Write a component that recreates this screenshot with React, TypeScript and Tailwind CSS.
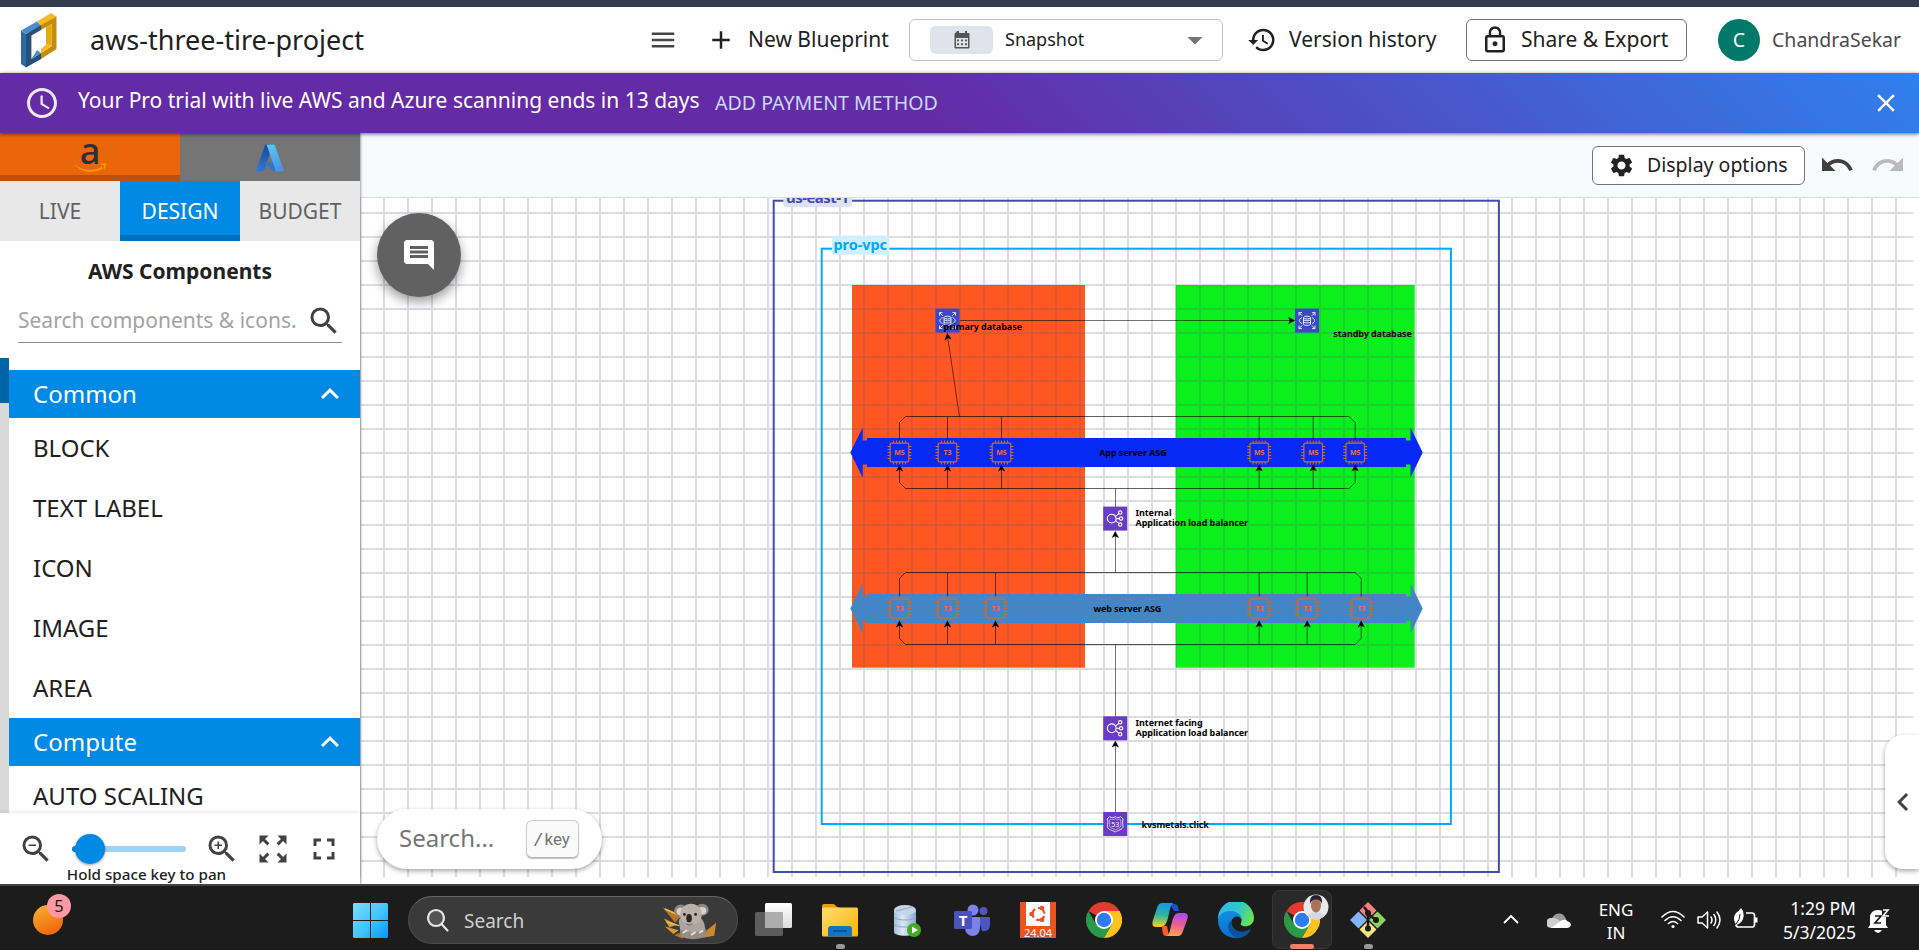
import React from "react";
import {
  MdMenu, MdAdd, MdHistory, MdLockOutline, MdSettings, MdUndo, MdRedo, MdSearch, MdZoomIn, MdZoomOut,
  MdZoomOutMap, MdFullscreen, MdComment, MdExpandLess, MdChevronLeft, MdAccessTime, MdClose, MdArrowDropDown,
} from "react-icons/md";

function Logo() {
  return (
    <svg width="36" height="55" viewBox="0 0 36 55">
      <path d="M0 17.500L5 21V54.500L0 51z" fill="#2f6ba3" />
      <path d="M0 17.500L16 8.500L20 12.500L5 21z" fill="#4a8dd0" />
      <path d="M16 8.500L30 0L35.500 3.500L20 12.500z" fill="#f8b922" />
      <path d="M5 21L20 12V17L10.400 22.500V46L20 40V46L5 54.500z" fill="#25507a" />
      <path d="M20 12L35.500 3.500V36L20 46V40L30.800 33V11L20 17z" fill="#c48c0c" />
      <path d="M25 14L30.800 11V33L25 31z" fill="#e8a90f" />
      <path d="M10.400 46L16 37L20 40z" fill="#4a8dd0" />
      <path d="M20 36L25.500 31L30.800 33L20 40z" fill="#f8b922" />
    </svg>
  );
}

function CalendarIcon() {
  return (
    <svg width="16" height="18" viewBox="0 0 16 18">
      <path d="M3 0h2v2h6V0h2v2h1.500a1 1 0 0 1 1 1v13.500a1 1 0 0 1-1 1h-13a1 1 0 0 1-1-1V3a1 1 0 0 1 1-1z" fill="#555" />
      <rect x="2" y="7" width="12" height="9" fill="#e1e3ec" />
      <g fill="#555">
        <rect x="3" y="8.500" width="2" height="1.800" /><rect x="7" y="8.500" width="2" height="1.800" /><rect x="11" y="8.500" width="2" height="1.800" />
        <rect x="3" y="12.300" width="2" height="1.800" /><rect x="7" y="12.300" width="2" height="1.800" /><rect x="11" y="12.300" width="2" height="1.800" />
      </g>
    </svg>
  );
}

function Header() {
  return (
    <header className="flex h-[66px] shrink-0 items-center bg-white text-[21px] text-[#212121]">
      <div className="flex w-[90px] pl-[21px]"><Logo /></div>
      <h1 className="w-[559px] text-[27px] leading-9">aws-three-tire-project</h1>
      <MdMenu className="ml-[-1px] size-[30px] text-[#444]" />
      <div className="ml-7 flex items-center">
        <MdAdd className="size-[30px]" />
        <span className="ml-3 w-[161px]">New Blueprint</span>
      </div>
      <div className="flex h-[42px] w-[314px] items-center rounded-md border border-[#c2c2c2] pl-5 text-[18px]">
        <span className="flex h-7 w-[63px] items-center justify-center rounded-md bg-[#e1e3ec]"><CalendarIcon /></span>
        <span className="ml-3 grow pb-0.5">Snapshot</span>
        <MdArrowDropDown className="mr-[9px] size-[36px] text-[#757575]" />
      </div>
      <MdHistory className="ml-[24px] size-[30px]" />
      <span className="ml-3 w-[177px]">Version history</span>
      <div className="flex h-[42px] w-[221px] items-center rounded-md border border-[#757575] pl-[13px]">
        <MdLockOutline className="size-[30px]" />
        <span className="ml-[11px]">Share &amp; Export</span>
      </div>
      <span className="ml-[31px] flex size-[42px] items-center justify-center rounded-full bg-[#00796b] text-[19.5px] text-white">C</span>
      <span className="ml-3 text-[19.5px] text-[#4a4a4a]">ChandraSekar</span>
    </header>
  );
}

function Banner() {
  return (
    <div className="z-10 flex h-[60px] shrink-0 items-center bg-[linear-gradient(45deg,#642ba6_48%,#2f80ed_100%)] text-white shadow-[0_1px_4px_rgba(0,0,0,0.6)]">
      <MdAccessTime className="ml-6 size-[36px] text-[#efe8f7]" />
      <span className="ml-[18px] w-[637px] pb-1 text-[21px]">Your Pro trial with live AWS and Azure scanning ends in 13 days</span>
      <span className="grow text-[19.6px] text-[#cbd8fb]">ADD PAYMENT METHOD</span>
      <MdClose className="mr-[18px] size-[30px]" />
    </div>
  );
}

function AmazonMark() {
  return (
    <svg width="34" height="34" viewBox="0 0 34 34" className="mt-1 overflow-visible">
      <text x="17" y="22.500" textAnchor="middle" fontSize="36" fontWeight="500" fill="#2b3036" fontFamily="Noto Sans, sans-serif">a</text>
      <path d="M1 22.500 C9 30.500 22 30.500 29 25.500 L29.500 27.500 C22 32.500 8 32.500 1 22.500z" fill="#ff9900" />
      <path d="M26 23 C29 22 32 22 33 22.500 C33.500 24.500 32 27.500 30.500 29 L31 24.500 z" fill="#ff9900" />
    </svg>
  );
}

function AzureMark() {
  return (
    <svg width="28" height="28" viewBox="0 0 28 28" className="mt-[2px]">
      <defs>
        <linearGradient id="azL" x1="0.500" y1="0" x2="0.300" y2="1"><stop offset="0" stopColor="#1b4a94" /><stop offset="1" stopColor="#3277d4" /></linearGradient>
        <linearGradient id="azR" x1="0.300" y1="0" x2="0.700" y2="1"><stop offset="0" stopColor="#5ec5f0" /><stop offset="1" stopColor="#4a91e6" /></linearGradient>
      </defs>
      <path d="M9.300 0.500 H17 L8.500 25.500 Q7.800 27.500 6 27.500 H1.200 Q-0.300 27.500 0.400 25.500z" fill="url(#azL)" />
      <path d="M8 18.500 H20 L21 27.500 H19.500 Q18.500 27.500 17.800 26.900z" fill="#2e74d3" />
      <path d="M10 0.500 H17.500 Q18.500 0.500 19 1.800 L27.500 25.500 Q28 27.500 26.500 27.500 H18.500 Q19.800 27 19.300 25.500 L11 1.800 Q10.700 0.700 10 0.500z" fill="url(#azR)" />
    </svg>
  );
}

function SectionHeader({ label }: { label: string }) {
  return (
    <div className="flex h-12 shrink-0 items-center justify-between bg-[#008ae6] pl-6 pr-3 text-2xl text-white">
      <span>{label}</span>
      <MdExpandLess className="size-[36px]" />
    </div>
  );
}

function Item({ label }: { label: string }) {
  return <div className="flex h-[60px] shrink-0 items-center pl-6 text-2xl text-[#212121]">{label}</div>;
}

function Sidebar() {
  return (
    <aside className="z-[5] flex w-[360px] shrink-0 flex-col bg-white shadow-[1px_0_2px_rgba(0,0,0,0.35)]">
      <div className="grid h-12 shrink-0 grid-cols-2">
        <div className="flex justify-center border-b-[6px] border-[#bf4f0a] bg-[#eb650b] pt-1"><AmazonMark /></div>
        <div className="flex justify-center bg-[#757575] pt-[9px]"><AzureMark /></div>
      </div>
      <div className="grid h-[60px] shrink-0 grid-cols-3 text-[21px] text-[#616161]">
        <div className="flex items-center justify-center bg-[#e8e8e8] pt-0.5">LIVE</div>
        <div className="flex items-center justify-center border-b-[6px] border-[#0070bd] bg-[#008ae6] pt-2 text-white">DESIGN</div>
        <div className="flex items-center justify-center bg-[#e8e8e8] pt-0.5">BUDGET</div>
      </div>
      <div className="flex h-[117px] shrink-0 flex-col px-[18px] pt-3">
        <h2 className="text-center text-[21px] leading-9 font-bold text-[#212121]">AWS Components</h2>
        <div className="mt-[10px] flex h-[44px] items-center justify-between border-b border-[#8c8c8c] text-[21px] text-[#a3a3a3]">
          <span>Search components &amp; icons.</span>
          <MdSearch className="size-[36px] text-[#424242]" />
        </div>
      </div>
      <div className="flex min-h-0 grow">
        <div className="w-[9px] shrink-0 bg-[#d9d9d9]"><div className="h-[45px] bg-[#0065a8]" /></div>
        <div className="flex grow flex-col overflow-hidden pt-3">
          <SectionHeader label="Common" />
          {["BLOCK", "TEXT LABEL", "ICON", "IMAGE", "AREA"].map((t) => <Item key={t} label={t} />)}
          <SectionHeader label="Compute" />
          <Item label="AUTO SCALING" />
        </div>
      </div>
      <div className="h-[71px] shrink-0 overflow-hidden bg-white shadow-[0_-1px_4px_rgba(0,0,0,0.1)]">
        <div className="flex h-[52px] items-center pt-5 text-[#424242]">
          <MdZoomOut className="ml-[18px] size-[36px]" />
          <div className="relative ml-[18px] h-[6px] w-[114px] rounded-full bg-[#9fd2f7]">
            <div className="h-full w-5 rounded-full bg-[#008ae6]" />
            <div className="absolute top-[-12px] left-[3px] size-[30px] rounded-full bg-[#008ae6] shadow-[0_1px_3px_rgba(0,0,0,0.4)]" />
          </div>
          <MdZoomIn className="ml-[18px] size-[36px]" />
          <MdZoomOutMap className="ml-[15px] size-[36px]" />
          <MdFullscreen className="ml-[15px] size-[36px]" />
        </div>
        <div className="w-[293px] text-center text-[15.2px] leading-[18px] font-medium text-[#212121]">Hold space key to pan</div>
      </div>
    </aside>
  );
}

function Arrow({ x, y, angle = 0 }: { x: number; y: number; angle?: number }) {
  return <path d="M0 0 L3.700 7 L0 5.200 L-3.700 7z" fill="#000" transform={`translate(${x} ${y}) rotate(${angle})`} />;
}

function Chip({ x, y, label }: { x: number; y: number; label: string }) {
  const pins = [-6, -3, 0, 3, 6];
  return (
    <g transform={`translate(${x} ${y})`} stroke="#d2692a" fill="none">
      <rect x="-9.300" y="-9.300" width="18.600" height="18.600" rx="1" strokeWidth="1.200" />
      <path
        strokeWidth="1"
        d={pins.map((p) => `M${p} -9.300V-12 M${p} 9.300V12 M-9.300 ${p}H-12 M9.300 ${p}H12`).join(" ")}
      />
      <text x="0" y="2.500" textAnchor="middle" fontSize="7" fontWeight="700" fill="#e8685a" stroke="none">{label}</text>
    </g>
  );
}

function Bar({ y, color }: { y: number; color: string }) {
  return (
    <path
      fill={color}
      d={`M850.300 ${y} L862.700 ${y - 25} V${y - 12} H867 V${y - 14.500} H1406 V${y - 12} H1410.500 V${y - 25} L1422.700 ${y} L1410.500 ${y + 25} V${y + 12} H1406 V${y + 14.500} H867 V${y + 12} H862.700 V${y + 25}z`}
    />
  );
}

function Group({ y, xs, labels, color }: { y: number; xs: number[]; labels: string[]; color: string }) {
  const a = xs[0];
  const b = xs[xs.length - 1];
  const mid = xs.slice(1, -1);
  return (
    <g>
      <Bar y={y} color={color} />
      <g stroke="#000" strokeOpacity="0.62" fill="none">
        <path d={`M${a} ${y - 12} V${y - 30} L${a + 6} ${y - 36} H${b - 6} L${b} ${y - 30} V${y - 12}`} />
        <path d={`M${a} ${y + 16} V${y + 30} L${a + 6} ${y + 36} H${b - 6} L${b} ${y + 30} V${y + 16}`} />
        <path d={mid.map((x) => `M${x} ${y - 36} V${y - 12} M${x} ${y + 36} V${y + 16}`).join(" ")} />
      </g>
      {xs.map((x, i) => <Chip key={x} x={x} y={y} label={labels[i]} />)}
      {xs.map((x) => <Arrow key={x} x={x} y={y + 12} />)}
    </g>
  );
}

function DatabaseNode({ x, y }: { x: number; y: number }) {
  return (
    <g transform={`translate(${x} ${y})`} fill="none" stroke="#e4e6fb" strokeWidth="1">
      <rect x="-12" y="-12" width="24" height="24" fill="#3b48cc" stroke="none" />
      <ellipse cx="0" cy="-3" rx="3.500" ry="1.400" />
      <path d="M-3.500 -3V3.500C-3.500 5.200 3.500 5.200 3.500 3.500V-3M-3.500 -0.800C-2.500 0.500 2.500 0.500 3.500 -0.800M-3.500 1.400C-2.500 2.700 2.500 2.700 3.500 1.400" />
      <path d="M-5 -3C-8.500 -1.500 -8.500 1.500 -5 3M5 -3C8.500 -1.500 8.500 1.500 5 3" />
      <path d="M-8 -5V-8H-5M-8 -8L-4.800 -4.800M8 -5V-8H5M8 -8L4.800 -4.800M-8 5V8H-5M-8 8L-4.800 4.800M8 5V8H5M8 8L4.800 4.800" />
    </g>
  );
}

function BalancerNode({ y }: { y: number }) {
  return (
    <g transform={`translate(1115.200 ${y})`} fill="none" stroke="#fff" strokeWidth="1.100">
      <rect x="-12" y="-12" width="24" height="24" fill="#693cc5" stroke="none" />
      <circle cx="-3.500" cy="0" r="4.400" />
      <path d="M1 0H4.200M0.300 -2.200L3.700 -4.800M0.300 2.200L3.700 4.800" />
      <circle cx="5.900" cy="0" r="1.700" />
      <circle cx="5" cy="-6" r="1.700" />
      <circle cx="5" cy="6" r="1.700" />
    </g>
  );
}

function RouteNode() {
  return (
    <g transform="translate(1115.200 824)" fill="none" stroke="#e6dcfa" strokeWidth="1">
      <rect x="-12" y="-12" width="24" height="24" fill="#693cc5" stroke="none" />
      <path d="M-5.500 -7.500C-3.500 -5.800 -1.500 -6.200 0 -7.300C1.500 -6.200 3.500 -5.800 5.500 -7.500L8 -5C6.500 -2 8 0 7.800 2.500C7.300 6 3 6 0 8C-3 6 -7.300 6 -7.800 2.500C-8 0 -6.500 -2 -8 -5z" />
      <path d="M-4.500 -5C-3 -4 -1.500 -4.300 0 -5.200C1.500 -4.300 3 -4 4.500 -5L5.800 -4C5 -1.500 6 0 5.700 2C5 4.200 2 4.500 0 5.800C-2 4.500 -5 4.200 -5.700 2C-6 0 -5 -1.500 -5.800 -4z" strokeWidth="0.600" />
      <text x="0" y="3" textAnchor="middle" fontSize="7" fill="#fff" stroke="none">53</text>
    </g>
  );
}

const labels: [string, number, number, number][] = [
  ["primary database", 943.5, 330, 78.5],
  ["standby database", 1333.3, 337, 78.5],
  ["App server ASG", 1099.2, 455.8, 67.5],
  ["web server ASG", 1093.4, 611.8, 68],
  ["Internal", 1135.6, 515.8, 36],
  ["Application load balancer", 1135.6, 525.8, 112.5],
  ["Internet facing", 1135.6, 726, 67],
  ["Application load balancer", 1135.6, 736, 112.5],
  ["kvsmetals.click", 1141.4, 828, 67.5],
];

function Diagram() {
  return (
    <svg width="1553" height="679" viewBox="360 198 1553 679" fontFamily="Noto Sans, sans-serif" className="block">
      <defs>
        <pattern id="grid" x="767" y="212" width="24" height="24" patternUnits="userSpaceOnUse">
          <path d="M0 0H24V2H2V24H0z" fill="#4c5768" fillOpacity="0.2" />
        </pattern>
      </defs>
      <rect x="852" y="285" width="233" height="382.700" fill="#ff5722" />
      <rect x="1175.700" y="285" width="239" height="382.700" fill="#0bf01c" />
      <rect x="360" y="198" width="1553" height="679" fill="url(#grid)" />
      <rect x="773.700" y="200.700" width="725.200" height="671.300" fill="none" stroke="#3f4db3" strokeWidth="2" />
      <rect x="821.700" y="248.700" width="629.200" height="575.300" fill="none" stroke="#03a9f4" strokeWidth="2" />
      <rect x="783.300" y="187" width="68.700" height="20" rx="3" fill="#e0e1f2" />
      <text x="786" y="202.500" fontSize="15" fontWeight="700" fill="#3f4db3" textLength="63">us-east-1</text>
      <rect x="832" y="235.500" width="57.500" height="19.300" rx="3" fill="#d3eefc" />
      <text x="833.500" y="250" fontSize="14.500" fontWeight="700" fill="#03a9f4" textLength="53.500">pro-vpc</text>
      <g stroke="#000" strokeOpacity="0.55" fill="none">
        <path d="M959.500 320.500H1290M959.400 416.500L948 339" />
        <path d="M1115.500 488.500V507M1115.500 536V572.500M1115.500 644.500V717M1115.500 746V812" />
      </g>
      <Group y={452.5} xs={[899.5, 947.5, 1001.5, 1259.2, 1313.2, 1355.2]} labels={["M5", "T3", "M5", "M5", "M5", "M5"]} color="#0629f5" />
      <Group y={608.5} xs={[899.5, 947.5, 995.5, 1259.2, 1307.2, 1361.2]} labels={["T3", "T3", "T3", "T3", "T3", "T3"]} color="#4486c5" />
      <DatabaseNode x={947.5} y={320.6} />
      <DatabaseNode x={1307} y={320.6} />
      <BalancerNode y={518.6} />
      <BalancerNode y={728.3} />
      <RouteNode />
      <Arrow x={1295} y={320.5} angle={90} />
      <Arrow x={947.3} y={333} angle={-7} />
      <Arrow x={1115.3} y={531} />
      <Arrow x={1115.3} y={740.5} />
      {labels.map(([t, x, y, w]) => (
        <text key={`${t}${y}`} x={x} y={y} fontSize="9" fontWeight="700" fill="#000" textLength={w}>{t}</text>
      ))}
    </svg>
  );
}

function Workspace() {
  return (
    <main className="flex min-w-0 grow flex-col bg-white">
      <div className="flex h-[65px] shrink-0 items-center justify-end border-b border-[#d9dce0] bg-[#f9fafc]">
        <div className="flex h-[39px] w-[213px] items-center rounded-md border border-[#757575] bg-white pl-[15px] text-[19.5px] text-[#212121]">
          <MdSettings className="size-[27px]" />
          <span className="ml-3">Display options</span>
        </div>
        <MdUndo className="ml-3.5 size-[36px] text-[#3f3f3f]" />
        <MdRedo className="mr-[13px] ml-[15px] size-[36px] text-[#bababa]" />
      </div>
      <div className="relative grow">
        <Diagram />
        <button className="absolute top-[15px] left-[17px] flex size-[84px] items-center justify-center rounded-full bg-[#616161] text-white shadow-[0_5px_12px_rgba(0,0,0,0.4)]">
          <MdComment className="size-[36px]" />
        </button>
        <div className="absolute top-[611px] left-[17px] flex h-[60px] w-[225px] items-center rounded-full bg-white pl-[22px] text-2xl text-[#757575] shadow-[0_2px_5px_rgba(0,0,0,0.35)]">
          <span className="w-[127px] pb-0.5">Search...</span>
          <span className="flex h-[38px] w-[53px] items-center justify-center rounded-md border border-[#ccc] border-b-[#b8b8b8] bg-[#fafafa] font-['Roboto',sans-serif] text-[17px] shadow-[0_1px_1px_rgba(0,0,0,0.25)]"><i className="mr-[3px] font-medium">/</i>key</span>
        </div>
        <div className="absolute top-[537px] right-0 flex h-[134px] w-[34px] items-center rounded-l-[18px] bg-white shadow-[0_2px_5px_rgba(0,0,0,0.35)]">
          <MdChevronLeft className="ml-0 size-[36px] shrink-0 text-[#424242]" />
        </div>
      </div>
    </main>
  );
}

function Chrome() {
  return (
    <svg width="36" height="36" viewBox="0 0 36 36">
      <path d="M18 18 L2.400 9 A18 18 0 0 1 33.600 9z" fill="#e33b2e" />
      <path d="M18 18 L10.200 22.500 L2.400 9 A18 18 0 0 0 18 36 L25.800 22.500z" fill="#2a9a48" />
      <path d="M18 9 H33.600 A18 18 0 0 1 18 36 L25.800 22.500z" fill="#fcc31c" />
      <circle cx="18" cy="18" r="9" fill="#fff" />
      <circle cx="18" cy="18" r="7.200" fill="#2f7cf0" />
    </svg>
  );
}

function Koala() {
  return (
    <svg width="56" height="42" viewBox="0 0 60 44">
      <path d="M3 29 L18 33 L12 37z M2 20 L16 27 L8 30z" fill="#d49a38" />
      <path d="M1 9 L22 16 L14 25z M13 38 L24 34 L22 42z" fill="#b57525" />
      <path d="M3 10 L20 18 M5 24 L18 28" stroke="#e8c36c" strokeWidth="1.500" />
      <path d="M48 33 L58 25 L56 39 L44 41z" fill="#c98a2c" />
      <path d="M18 24 C18 18 24 16 31 16 C42 16 47 24 46 34 C45 42 22 42 20 36z" fill="#aca49d" />
      <ellipse cx="20" cy="12" rx="7" ry="6.500" fill="#8d8580" />
      <ellipse cx="20" cy="13" rx="4.500" ry="4" fill="#dccfc9" />
      <ellipse cx="43" cy="11" rx="7" ry="6.500" fill="#8d8580" />
      <ellipse cx="43" cy="12" rx="4.500" ry="4" fill="#dccfc9" />
      <ellipse cx="31" cy="16" rx="11.500" ry="11.500" fill="#b9b1aa" />
      <ellipse cx="29" cy="20" rx="3" ry="4.500" fill="#2b2625" />
      <circle cx="24" cy="16" r="1.500" fill="#201c1a" />
      <circle cx="36" cy="16" r="1.500" fill="#201c1a" />
      <path d="M26 26 Q29 29 33 26" stroke="#6a5b55" fill="none" />
      <path d="M20 32 Q33 39 47 31 V40 Q33 45 20 40z" fill="#958c86" />
      <path d="M22 36 L27 33 M31 38 L36 35 M40 36 L44 33" stroke="#e6dfd9" strokeWidth="2" />
    </svg>
  );
}

function TaskIcon({ children, dot = false }: { children: React.ReactNode; dot?: boolean }) {
  return (
    <div className="flex w-[66px] shrink-0 flex-col items-center pt-4">
      {children}
      {dot && <span className="mt-[6px] h-[5px] w-[9px] rounded-full bg-[#969696]" />}
    </div>
  );
}

function Taskbar() {
  return (
    <footer className="z-20 flex h-[66px] shrink-0 border-t-2 border-[#424242] bg-[#1c1c1c] font-['Noto_Sans',sans-serif] text-white">
      <div className="w-[353px] shrink-0 pt-[7px] pl-[32px]">
        <svg width="40" height="44" viewBox="0 0 40 44">
          <defs><linearGradient id="orb" x1="0" y1="0" x2="0.500" y2="1"><stop offset="0" stopColor="#f4b436" /><stop offset="1" stopColor="#f26a0c" /></linearGradient></defs>
          <circle cx="16" cy="27" r="15" fill="url(#orb)" />
          <circle cx="27" cy="13" r="12" fill="#ff98a2" />
          <text x="27" y="19" textAnchor="middle" fontSize="16.500" fill="#1a1a1a">5</text>
        </svg>
      </div>
      <div className="w-[55px] shrink-0 pt-[17px]">
        <svg width="35" height="35" viewBox="0 0 35 35">
          <defs><linearGradient id="win" gradientUnits="userSpaceOnUse" x1="0" y1="0" x2="35" y2="35"><stop offset="0" stopColor="#80dcff" /><stop offset="0.550" stopColor="#3ec4fc" /><stop offset="1" stopColor="#0894fa" /></linearGradient></defs>
          <path d="M1 0H17V17H0V1zM18 0H34L35 1V17H18zM0 18H17V35H1L0 34zM18 18H35V34L34 35H18z" fill="url(#win)" />
        </svg>
      </div>
      <div className="mt-[10px] mr-[3px] flex h-12 w-[330px] shrink-0 items-center rounded-full border border-[#4d4d4d] border-t-[#666] bg-[#3a3a3a] pl-4 text-[#cfcfcf]">
        <svg width="25" height="25" viewBox="0 0 25 25" fill="none" stroke="#e6e6e6" strokeWidth="2.200" strokeLinecap="round"><circle cx="11" cy="10" r="8" fill="#555" /><path d="M16.500 16L22.500 22.500" /></svg>
        <span className="ml-3.5 grow pt-0.5 text-[19px]">Search</span>
        <span className="mr-[19px]"><Koala /></span>
      </div>
      <TaskIcon>
        <svg width="38" height="36" viewBox="0 0 38 36">
          <defs><linearGradient id="tv" x1="0" y1="0" x2="0" y2="1"><stop offset="0" stopColor="#fff" /><stop offset="1" stopColor="#dcdcdc" /></linearGradient></defs>
          <rect x="10" y="1" width="27" height="25" rx="1.500" fill="url(#tv)" />
          <rect x="0" y="10" width="28" height="24" rx="1.500" fill="#5c5c5c" />
          <path d="M10 10H28V26H10z" fill="#adadad" />
        </svg>
      </TaskIcon>
      <TaskIcon dot>
        <svg width="36" height="36" viewBox="0 0 36 36">
          <defs><linearGradient id="fold" x1="0" y1="0" x2="1" y2="1"><stop offset="0" stopColor="#ffdc72" /><stop offset="1" stopColor="#f8b600" /></linearGradient></defs>
          <path d="M0 4Q0 2 2 2H11Q12 2 13 3L16 6V12H0z" fill="#e3a008" />
          <rect x="0" y="5.500" width="36" height="29" rx="1.500" fill="url(#fold)" />
          <path d="M0 9 V6 H13 L17 5 V9z" fill="#ffd55c" opacity="0.6" />
          <path d="M6 34.500V27Q6 24 9 24H27Q30 24 30 27V34.500z" fill="#1474c4" />
          <path d="M11 29H25" stroke="#0b4a87" strokeWidth="1.500" />
        </svg>
      </TaskIcon>
      <TaskIcon>
        <svg width="36" height="36" viewBox="0 0 36 36">
          <defs><linearGradient id="db" x1="0" x2="1"><stop offset="0" stopColor="#a7bddc" /><stop offset="0.400" stopColor="#dbe7f5" /><stop offset="1" stopColor="#8ba6cc" /></linearGradient></defs>
          <path d="M6 8V30C6 35 28 35 28 30V8z" fill="url(#db)" />
          <ellipse cx="17" cy="8" rx="11" ry="5" fill="#c3d5ea" />
          <path d="M8 9L24 5" stroke="#8fa9cc" />
          <path d="M6 15C6 19 28 19 28 15M6 22C6 26 28 26 28 22" stroke="#8fa9cb" fill="none" />
          <circle cx="26" cy="28" r="7" fill="#3eae1c" /><path d="M24 24.500L30 28L24 31.500z" fill="#fff" />
        </svg>
      </TaskIcon>
      <TaskIcon>
        <svg width="36" height="36" viewBox="0 0 36 36">
          <circle cx="29.500" cy="9" r="4" fill="#4f56c4" /><path d="M24 15H35Q36 15 36 16V23Q36 30 28 29z" fill="#4c55c0" />
          <circle cx="19" cy="8" r="5.500" fill="#7b83eb" /><path d="M11 15H26V25Q26 34 18 34Q11 33 11 25z" fill="#7b83eb" />
          <rect x="0" y="9" width="18" height="18" rx="1.500" fill="#4a53bc" />
          <text x="9" y="23.500" textAnchor="middle" fontSize="15" fontWeight="700" fill="#fff">T</text>
        </svg>
      </TaskIcon>
      <TaskIcon>
        <svg width="36" height="36" viewBox="0 0 36 36">
          <rect width="36" height="36" fill="#ea5421" /><rect x="6" width="24" height="24" fill="#fff" />
          <circle cx="18.500" cy="12" r="6" fill="none" stroke="#ea5421" strokeWidth="2.200" strokeDasharray="9.500 3" strokeDashoffset="-2" />
          <circle cx="11.500" cy="12" r="2.300" fill="#ea5421" /><circle cx="22" cy="6" r="2.300" fill="#ea5421" /><circle cx="22" cy="18" r="2.300" fill="#ea5421" />
          <text x="18" y="35" textAnchor="middle" fontSize="11" fill="#fff" textLength="28">24.04</text>
        </svg>
      </TaskIcon>
      <TaskIcon><Chrome /></TaskIcon>
      <TaskIcon>
        <svg width="36" height="36" viewBox="0 0 36 36">
          <defs>
            <linearGradient id="cpA" x1="0.500" y1="0" x2="0.400" y2="1"><stop offset="0" stopColor="#1596ec" /><stop offset="0.500" stopColor="#2fb5a0" /><stop offset="1" stopColor="#f5d114" /></linearGradient>
            <linearGradient id="cpB" x1="0.600" y1="0" x2="0.400" y2="1"><stop offset="0" stopColor="#a64df0" /><stop offset="0.500" stopColor="#f05c92" /><stop offset="1" stopColor="#ffa24c" /></linearGradient>
          </defs>
          <path d="M18 2H22Q25 2 26 5L27 9H22z" fill="#1a4fd8" />
          <path d="M10 1H22C18 2 18 8 16 16C14 23 12 25 8 25H4C0 25 0 22 1 18L5 6Q6.500 1 10 1z" fill="url(#cpA)" />
          <path d="M10 24H15L17 34H14Q11 34 10.500 30z" fill="#ff5a2c" />
          <path d="M26 34H14C18 33 18 27 20 20C22 12 24 11 28 11H32C36 11 36.500 14 35 18L31 29Q29.500 34 26 34z" fill="url(#cpB)" />
        </svg>
      </TaskIcon>
      <TaskIcon>
        <svg width="36" height="36" viewBox="0 0 36 36">
          <defs>
            <linearGradient id="edA" x1="0" y1="0.200" x2="1" y2="0.600"><stop offset="0" stopColor="#35b8ee" /><stop offset="0.500" stopColor="#2fc6cf" /><stop offset="1" stopColor="#66e552" /></linearGradient>
            <linearGradient id="edB" x1="0" y1="0" x2="0.300" y2="1"><stop offset="0" stopColor="#1490df" /><stop offset="1" stopColor="#0a6fd0" /></linearGradient>
          </defs>
          <path d="M0 17A18 18 0 0 1 36 16C36 24 27 26 23 23C22 22 24 21 23.500 17C22.500 11 10 8 0 17z" fill="url(#edA)" />
          <path d="M0 18C1 11 8 8.500 13 9C20 9.500 24 14 23 17C21 13 15 14 13.500 19C11 28 21 34 31 30C27 35 22 36 18 36C7 36 0 28 0 18z" fill="url(#edB)" />
          <path d="M13.800 18C12 23 17 30 24 29.500C29 29.500 31 27.500 33 27C31 32 26 35.500 20 36C9 33 8 22 13.800 18z" fill="#0f5299" />
        </svg>
      </TaskIcon>
      <div className="mx-[3px] mt-1 h-[59px] w-[60px] shrink-0 rounded-lg border border-[#373737] bg-[#292929]">
        <div className="relative flex flex-col items-center pt-[11px]">
          <Chrome />
          <svg width="26" height="26" viewBox="0 0 26 26" className="absolute top-[3px] left-[30px]">
            <defs><clipPath id="face"><circle cx="13" cy="13" r="12.500" /></clipPath></defs>
            <g clipPath="url(#face)">
              <rect width="26" height="26" fill="#e9e9ec" />
              <path d="M3 26Q4 18 13 18Q22 18 23 26z" fill="#d5d8e2" />
              <ellipse cx="13" cy="11.500" rx="5" ry="7" fill="#a87358" />
              <path d="M7 10Q6 1 13 1Q20 1 19 10Q17 5 13 5.500Q9 5 7 10z" fill="#29203a" />
            </g>
          </svg>
          <span className="mt-[6px] h-[5px] w-6 rounded-full bg-[#f28066]" />
        </div>
      </div>
      <TaskIcon dot>
        <svg width="36" height="36" viewBox="0 0 36 36">
          <path d="M18 0L26.500 8.500L18 17L9.500 8.500z" fill="#f47f80" /><path d="M27.500 9.500L36 18L27.500 26.500L19 18z" fill="#8fd163" />
          <path d="M18 19L26.500 27.500L18 36L9.500 27.500z" fill="#fbe37c" /><path d="M8.500 9.500L17 18L8.500 26.500L0 18z" fill="#85b3f8" />
          <path d="M14 5L18 10V27M18 12L26 18" stroke="#1a1a1a" strokeWidth="2.500" fill="none" />
          <circle cx="18" cy="11" r="3" fill="#1a1a1a" /><circle cx="26" cy="18" r="3" fill="#1a1a1a" /><circle cx="18" cy="26.500" r="3" fill="#1a1a1a" />
        </svg>
      </TaskIcon>
      <div className="flex grow items-start justify-end text-[17.5px]">
        <svg width="16" height="10" viewBox="0 0 16 10" className="mt-7" fill="none" stroke="#fff" strokeWidth="1.800"><path d="M1 9L8 2L15 9" /></svg>
        <svg width="24" height="17" viewBox="0 0 24 17" className="mt-[26px] ml-7">
          <path d="M5 8A7 7 0 0 1 18 5L20 9L12 12z" fill="#9a9a9a" /><path d="M4 16A4.500 4.500 0 0 1 4 6Q8 5 13 9L9 16z" fill="#cfcfcf" />
          <path d="M4 16L15 8Q19 7 20 9Q24 10 24 13Q23 16 20 16z" fill="#fff" />
        </svg>
        <div className="mt-3 ml-[24px] w-[42px] text-center text-[17px] leading-[23px]">ENG<br />IN</div>
        <svg width="24" height="19" viewBox="0 0 24 19" className="mt-[24px] ml-[24px]" fill="none" stroke="#fff" strokeWidth="1.600" strokeLinecap="round">
          <path d="M1 7Q12 -4 23 7M4 10.500Q12 3 20 10.500M7.500 13.500Q12 9.500 16.500 13.500" /><circle cx="12" cy="16.500" r="1.600" fill="#fff" stroke="none" />
        </svg>
        <svg width="25" height="20" viewBox="0 0 25 20" className="mt-[24px] ml-3" fill="none" stroke="#fff" strokeWidth="1.500" strokeLinejoin="round" strokeLinecap="round">
          <path d="M1 7H5L10.500 2V18L5 13H1zM14 7Q16 10 14 13M17 4.500Q20.500 10 17 15.500M20 2Q26 10 20 18" />
        </svg>
        <svg width="26" height="22" viewBox="0 0 26 22" className="mt-[21px] ml-[11px]" fill="none" stroke="#fff" strokeWidth="1.700">
          <path d="M13 6H19Q21.500 6 21.500 8.500V17.500Q21.500 20 19 20H6Q3 20 3 18" /><path d="M22 10.500H24.500V15.500H22z" fill="#fff" stroke="none" />
          <path d="M8 1Q12 5 10 12Q8 17 3 18Q-1 11 3 6Q6 4 8 1z" fill="#fff" stroke="none" /><path d="M3 17Q7 13 7 7" stroke="#1c1c1c" strokeWidth="1" />
        </svg>
        <div className="mt-[10px] ml-[4px] w-[93px] text-right leading-6">1:29 PM<br />5/3/2025</div>
        <svg width="24" height="25" viewBox="0 0 24 25" className="mt-[22px] mr-[28px] ml-[11px]">
          <path d="M3 17V10Q3 2 11 2Q19 2 19 10V17L21 20H1z" fill="#fff" /><path d="M7 22H15Q13 25 11 25Q9 25 7 22z" fill="#fff" />
          <path d="M8 8H14L8 15H14" stroke="#1c1c1c" strokeWidth="1.700" fill="none" /><path d="M15 0H24V9H15z" fill="#1c1c1c" /><path d="M16 2H21L16 8H22" stroke="#fff" strokeWidth="1.600" fill="none" />
        </svg>
      </div>
    </footer>
  );
}

export default function App() {
  return (
    <div className="flex h-[950px] w-[1919px] flex-col overflow-hidden bg-white font-['Noto_Sans',sans-serif]">
      <div className="h-[7px] shrink-0 bg-[#343c4d]" />
      <Header />
      <Banner />
      <div className="flex h-[751px] shrink-0">
        <Sidebar />
        <Workspace />
      </div>
      <Taskbar />
    </div>
  );
}
